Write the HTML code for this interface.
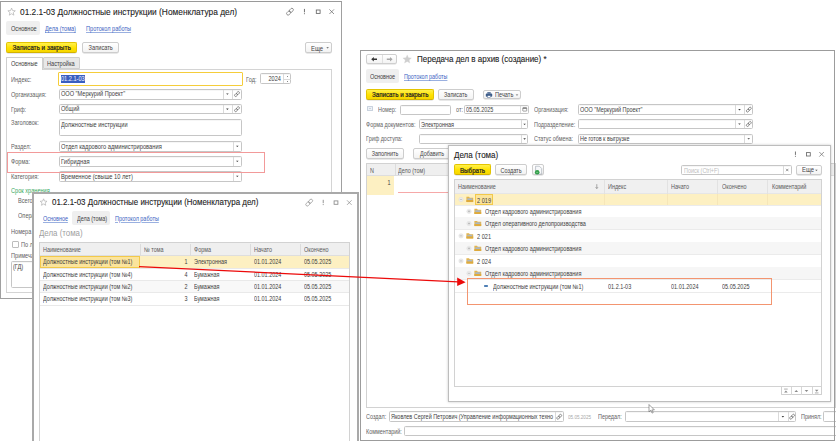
<!DOCTYPE html><html><head><meta charset="utf-8"><style>
html,body{margin:0;padding:0;background:#fff;width:836px;height:441px;overflow:hidden;position:relative;font-family:"Liberation Sans",sans-serif}
body div{position:absolute}
.t{white-space:nowrap}
.s{position:absolute;left:0;top:0;overflow:visible}
</style></head><body>
<div style="left:0px;top:1px;width:342px;height:298px;border:1px solid #a0a0a0;border-top:1.5px solid #9a9a9a;box-sizing:border-box;background:#fff"></div>
<svg class="s" width="836" height="441" viewBox="0 0 836 441"><polygon points="11.60,8.10 12.63,10.58 15.31,10.79 13.27,12.54 13.89,15.16 11.60,13.75 9.31,15.16 9.93,12.54 7.89,10.79 10.57,10.58" fill="none" stroke="#b0b0b0" stroke-width="0.7"/></svg>
<div class="t" style="left:20px;top:5.62px;font-size:8.851px;line-height:13.36px;color:#222;transform:scaleX(0.9434);transform-origin:left center;-webkit-text-stroke:0.1px #222">01.2.1-03 Должностные инструкции (Номенклатура дел)</div>
<svg class="s" width="836" height="441" viewBox="0 0 836 441"><g transform="translate(290,11.7) rotate(-45)" fill="none" stroke="#666" stroke-width="0.65"><rect x="-4.2" y="-1.5" width="4.6" height="3" rx="1.5"/><rect x="-0.4" y="-1.5" width="4.6" height="3" rx="1.5"/></g><rect x="303.95" y="8.899999999999999" width="0.9" height="3.4" fill="#666"/><rect x="303.95" y="13.2" width="0.9" height="1" fill="#666"/><rect x="316.3" y="10.0" width="3.8" height="3.4" fill="none" stroke="#666" stroke-width="0.85"/><path d="M329.4 9.399999999999999l4.6 4.6M334.0 9.399999999999999l-4.6 4.6" stroke="#666" stroke-width="0.7"/></svg>
<div style="left:6.3px;top:21.1px;width:34.2px;height:14.3px;background:#efefef;border-radius:2px"></div>
<div class="t" style="left:11px;top:24.92px;font-size:6.72px;line-height:8.96px;color:#404040;transform:scaleX(0.8333);transform-origin:left center;">Основное</div>
<div class="t" style="left:45.3px;top:24.92px;font-size:6.72px;line-height:8.96px;color:#3a62c2;transform:scaleX(0.8333);transform-origin:left center;text-decoration:underline;text-decoration-thickness:0.5px;text-underline-offset:0.9px;text-decoration-color:#9ab0e0">Дела (тома)</div>
<div class="t" style="left:86px;top:24.92px;font-size:6.72px;line-height:8.96px;color:#3a62c2;transform:scaleX(0.8333);transform-origin:left center;text-decoration:underline;text-decoration-thickness:0.5px;text-underline-offset:0.9px;text-decoration-color:#9ab0e0">Протокол работы</div>
<div style="left:6.3px;top:41.5px;width:71.2px;height:11.3px;background:linear-gradient(#fff14d,#ffe200 55%,#f6d600);border:1px solid #e3c400;border-bottom-color:#d4b300;box-sizing:border-box;border-radius:2px;box-shadow:0 0.6px 0.6px rgba(0,0,0,0.18)"></div>
<div class="t" style="left:6.3px;width:71.2px;text-align:center;top:42.95px;line-height:10px;font-size:6.816px;-webkit-text-stroke:0.22px #262626;color:#262626;transform:scaleX(0.9434);transform-origin:center center">Записать и закрыть</div>
<div style="left:81.6px;top:41.5px;width:37.4px;height:11.3px;background:linear-gradient(#ffffff,#f3f3f3);border:1px solid #cdcdcd;box-sizing:border-box;border-radius:2px;box-shadow:0 0.6px 0.6px rgba(0,0,0,0.18)"></div>
<div class="t" style="left:81.6px;width:37.4px;text-align:center;top:42.95px;line-height:10px;font-size:6.804px;color:#444;transform:scaleX(0.8333);transform-origin:center center">Записать</div>
<div style="left:305.1px;top:41.5px;width:26.7px;height:11.4px;background:linear-gradient(#ffffff,#f3f3f3);border:1px solid #cdcdcd;box-sizing:border-box;border-radius:2px;box-shadow:0 0.6px 0.6px rgba(0,0,0,0.18)"></div>
<div class="t" style="left:311px;top:43.6px;font-size:7.2px;line-height:9.6px;color:#444;transform:scaleX(0.8333);transform-origin:left center;">Еще</div>
<svg class="s" width="836" height="441" viewBox="0 0 836 441"><path d="M326.3 47.199999999999996h2.6l-1.3 1.4z" fill="#555"/></svg>
<div style="left:5.8px;top:69px;width:326.4px;height:223.6px;border:1px solid #d4d4d4;box-sizing:border-box"></div>
<div style="left:42.5px;top:57.4px;width:37.1px;height:12.1px;background:#e8e8e8;border:1px solid #cfcfcf;box-sizing:border-box;border-radius:1px 1px 0 0"></div>
<div style="left:5.8px;top:57.4px;width:37.0px;height:12.6px;background:#fff;border:1px solid #cfcfcf;border-bottom:none;box-sizing:border-box;border-radius:1px 1px 0 0"></div>
<div class="t" style="left:11px;top:59.92px;font-size:6.72px;line-height:8.96px;color:#404040;transform:scaleX(0.8333);transform-origin:left center;">Основные</div>
<div class="t" style="left:47px;top:59.92px;font-size:6.72px;line-height:8.96px;color:#404040;transform:scaleX(0.8333);transform-origin:left center;">Настройка</div>
<div class="t" style="left:11px;top:75.62px;font-size:6.72px;line-height:8.96px;color:#626262;transform:scaleX(0.8333);transform-origin:left center;">Индекс:</div>
<div style="left:58px;top:72.3px;width:184.6px;height:13.3px;border:1.5px solid #f5cd3a;box-sizing:border-box;background:#fff;border-radius:1px"></div>
<div style="left:61px;top:75.2px;width:24px;height:7.6px;background:#3a5fbf"></div>
<div class="t" style="left:61.2px;top:75.32px;font-size:6.72px;line-height:8.96px;color:#f4f6ff;transform:scaleX(0.8333);transform-origin:left center;">01.2.1-03</div>
<div class="t" style="left:246px;top:75.62px;font-size:6.72px;line-height:8.96px;color:#626262;transform:scaleX(0.8333);transform-origin:left center;">Год:</div>
<div style="left:259.6px;top:73.3px;width:31.8px;height:11.0px;border:1px solid #c6c6c6;box-sizing:border-box;background:#fff;border-radius:1.5px;box-shadow:inset 0 0.6px 0.6px rgba(0,0,0,0.07);"></div>
<div style="left:282.6px;top:74.3px;width:0.9px;height:9.0px;background:#dadada"></div>
<div style="left:283.5px;top:78.6px;width:7.0px;height:0.7px;background:#dadada"></div>
<div style="left:286.6px;top:76px;width:0.7px;height:0.7px;background:#888"></div>
<div style="left:286.6px;top:81.4px;width:0.7px;height:0.7px;background:#888"></div>
<div class="t" style="right:554.8px;top:75.32px;font-size:6.72px;line-height:8.96px;color:#404040;transform:scaleX(0.8333);transform-origin:right center;">2024</div>
<div class="t" style="left:11px;top:90.72px;font-size:6.72px;line-height:8.96px;color:#626262;transform:scaleX(0.8333);transform-origin:left center;">Организация:</div>
<div style="left:59px;top:88.5px;width:183px;height:11.1px;border:1px solid #c6c6c6;box-sizing:border-box;background:#fff;border-radius:1.5px;box-shadow:inset 0 0.6px 0.6px rgba(0,0,0,0.07);"></div>
<div style="left:222.6px;top:89.5px;width:0.9px;height:9.1px;background:#dadada"></div>
<div style="left:232.1px;top:89.5px;width:0.9px;height:9.1px;background:#dadada"></div>
<div class="t" style="left:61px;top:90.17px;font-size:6.72px;line-height:8.96px;color:#404040;transform:scaleX(0.8333);transform-origin:left center;">ООО "Меркурий Проект"</div>
<svg class="s" width="836" height="441" viewBox="0 0 836 441"><path d="M226.1 93.45h2.6l-1.3 1.4z" fill="#3a3a3a"/></svg>
<svg class="s" width="836" height="441" viewBox="0 0 836 441"><g transform="translate(237,94.05) rotate(-45)" fill="none" stroke="#666" stroke-width="0.7"><rect x="-3" y="-1.1" width="3.2" height="2.2" rx="1.1"/><rect x="-0.2" y="-1.1" width="3.2" height="2.2" rx="1.1"/></g></svg>
<div class="t" style="left:11px;top:105.82px;font-size:6.72px;line-height:8.96px;color:#626262;transform:scaleX(0.8333);transform-origin:left center;">Гриф:</div>
<div style="left:59px;top:103.9px;width:183px;height:10.6px;border:1px solid #c6c6c6;box-sizing:border-box;background:#fff;border-radius:1.5px;box-shadow:inset 0 0.6px 0.6px rgba(0,0,0,0.07);"></div>
<div style="left:222.6px;top:104.9px;width:0.9px;height:8.6px;background:#dadada"></div>
<div style="left:232.1px;top:104.9px;width:0.9px;height:8.6px;background:#dadada"></div>
<div class="t" style="left:61px;top:105.32px;font-size:6.72px;line-height:8.96px;color:#404040;transform:scaleX(0.8333);transform-origin:left center;">Общий</div>
<svg class="s" width="836" height="441" viewBox="0 0 836 441"><path d="M226.1 108.60000000000001h2.6l-1.3 1.4z" fill="#3a3a3a"/></svg>
<svg class="s" width="836" height="441" viewBox="0 0 836 441"><g transform="translate(237,109.2) rotate(-45)" fill="none" stroke="#666" stroke-width="0.7"><rect x="-3" y="-1.1" width="3.2" height="2.2" rx="1.1"/><rect x="-0.2" y="-1.1" width="3.2" height="2.2" rx="1.1"/></g></svg>
<div class="t" style="left:11px;top:119.32px;font-size:6.72px;line-height:8.96px;color:#626262;transform:scaleX(0.8333);transform-origin:left center;">Заголовок:</div>
<div style="left:59px;top:119.3px;width:183px;height:17.0px;border:1px solid #c6c6c6;box-sizing:border-box;background:#fff;border-radius:1.5px;box-shadow:inset 0 0.6px 0.6px rgba(0,0,0,0.07);"></div>
<div class="t" style="left:61px;top:120.82px;font-size:6.72px;line-height:8.96px;color:#404040;transform:scaleX(0.8333);transform-origin:left center;">Должностные инструкции</div>
<div class="t" style="left:11px;top:142.82px;font-size:6.72px;line-height:8.96px;color:#626262;transform:scaleX(0.8333);transform-origin:left center;">Раздел:</div>
<div style="left:59px;top:140.8px;width:183px;height:10.9px;border:1px solid #c6c6c6;box-sizing:border-box;background:#fff;border-radius:1.5px;box-shadow:inset 0 0.6px 0.6px rgba(0,0,0,0.07);"></div>
<div style="left:232.6px;top:141.8px;width:0.9px;height:8.9px;background:#dadada"></div>
<div class="t" style="left:61px;top:142.25px;font-size:6.9px;line-height:9.2px;color:#404040;transform:scaleX(0.8333);transform-origin:left center;">Отдел кадрового администрирования</div>
<svg class="s" width="836" height="441" viewBox="0 0 836 441"><path d="M236.0 145.65h2.6l-1.3 1.4z" fill="#3a3a3a"/></svg>
<div class="t" style="left:11px;top:157.52px;font-size:6.72px;line-height:8.96px;color:#626262;transform:scaleX(0.8333);transform-origin:left center;">Форма:</div>
<div style="left:59px;top:155.6px;width:183px;height:11.3px;border:1px solid #c6c6c6;box-sizing:border-box;background:#fff;border-radius:1.5px;box-shadow:inset 0 0.6px 0.6px rgba(0,0,0,0.07);"></div>
<div style="left:232.6px;top:156.6px;width:0.9px;height:9.3px;background:#dadada"></div>
<div class="t" style="left:61px;top:157.25px;font-size:6.9px;line-height:9.2px;color:#404040;transform:scaleX(0.8333);transform-origin:left center;">Гибридная</div>
<svg class="s" width="836" height="441" viewBox="0 0 836 441"><path d="M236.0 160.65h2.6l-1.3 1.4z" fill="#3a3a3a"/></svg>
<div class="t" style="left:11px;top:172.92px;font-size:6.72px;line-height:8.96px;color:#626262;transform:scaleX(0.8333);transform-origin:left center;">Категория:</div>
<div style="left:59px;top:171px;width:183px;height:10.6px;border:1px solid #c6c6c6;box-sizing:border-box;background:#fff;border-radius:1.5px;box-shadow:inset 0 0.6px 0.6px rgba(0,0,0,0.07);"></div>
<div style="left:232.6px;top:172px;width:0.9px;height:8.6px;background:#dadada"></div>
<div class="t" style="left:61px;top:172.3px;font-size:6.9px;line-height:9.2px;color:#404040;transform:scaleX(0.8333);transform-origin:left center;">Временное (свыше 10 лет)</div>
<svg class="s" width="836" height="441" viewBox="0 0 836 441"><path d="M236.0 175.70000000000002h2.6l-1.3 1.4z" fill="#3a3a3a"/></svg>
<div style="left:7.3px;top:151.7px;width:257.5px;height:20.9px;border:1px solid #f29a9a;box-sizing:border-box"></div>
<div class="t" style="left:11px;top:186.52px;font-size:6.72px;line-height:8.96px;color:#36a860;transform:scaleX(0.8333);transform-origin:left center;">Срок хранения</div>
<div class="t" style="left:18px;top:196.92px;font-size:6.72px;line-height:8.96px;color:#626262;transform:scaleX(0.8333);transform-origin:left center;">Всего</div>
<div class="t" style="left:18px;top:211.92px;font-size:6.72px;line-height:8.96px;color:#626262;transform:scaleX(0.8333);transform-origin:left center;">Оперативно</div>
<div class="t" style="left:11px;top:227.62px;font-size:6.72px;line-height:8.96px;color:#626262;transform:scaleX(0.8333);transform-origin:left center;">Номера</div>
<div style="left:11.5px;top:240.6px;width:7.0px;height:7.0px;border:1px solid #bdbdbd;box-sizing:border-box;background:#fff;border-radius:1px"></div>
<div class="t" style="left:21px;top:240.52px;font-size:6.72px;line-height:8.96px;color:#626262;transform:scaleX(0.8333);transform-origin:left center;">По л</div>
<div class="t" style="left:11px;top:251.82px;font-size:6.72px;line-height:8.96px;color:#626262;transform:scaleX(0.8333);transform-origin:left center;">Примечание</div>
<div style="left:11px;top:261px;width:49px;height:27px;border:1px solid #c6c6c6;box-sizing:border-box;background:#fff;border-radius:1.5px;box-shadow:inset 0 0.6px 0.6px rgba(0,0,0,0.07);"></div>
<div class="t" style="left:13.2px;top:262.52px;font-size:6.72px;line-height:8.96px;color:#404040;transform:scaleX(0.8333);transform-origin:left center;">(ГД)</div>
<div style="left:32px;top:192px;width:327px;height:268px;border:2px solid #a9a9a9;box-sizing:border-box;background:#fff"></div>
<svg class="s" width="836" height="441" viewBox="0 0 836 441"><polygon points="43.60,198.80 44.55,201.09 47.02,201.29 45.14,202.90 45.72,205.31 43.60,204.02 41.48,205.31 42.06,202.90 40.18,201.29 42.65,201.09" fill="none" stroke="#b0b0b0" stroke-width="0.7"/></svg>
<div class="t" style="left:52px;top:196.44px;font-size:8.427px;line-height:12.72px;color:#222;transform:scaleX(0.9434);transform-origin:left center;-webkit-text-stroke:0.1px #222">01.2.1-03 Должностные инструкции (Номенклатура дел)</div>
<svg class="s" width="836" height="441" viewBox="0 0 836 441"><g transform="translate(309.2,202.6) rotate(-45)" fill="none" stroke="#8a8a8a" stroke-width="0.65"><rect x="-4.2" y="-1.5" width="4.6" height="3" rx="1.5"/><rect x="-0.4" y="-1.5" width="4.6" height="3" rx="1.5"/></g><rect x="322.75" y="199.79999999999998" width="0.9" height="3.4" fill="#8a8a8a"/><rect x="322.75" y="204.1" width="0.9" height="1" fill="#8a8a8a"/><rect x="334.1" y="200.9" width="3.8" height="3.4" fill="none" stroke="#8a8a8a" stroke-width="0.85"/><path d="M347.0 200.29999999999998l4.6 4.6M351.6 200.29999999999998l-4.6 4.6" stroke="#8a8a8a" stroke-width="0.7"/></svg>
<div class="t" style="left:43.2px;top:214.64px;font-size:6.54px;line-height:8.72px;color:#3a62c2;transform:scaleX(0.8333);transform-origin:left center;text-decoration:underline;text-decoration-thickness:0.5px;text-underline-offset:0.9px;text-decoration-color:#9ab0e0">Основное</div>
<div style="left:72.3px;top:211px;width:37.7px;height:13.6px;background:#efefef;border-radius:2px"></div>
<div class="t" style="left:77px;top:214.64px;font-size:6.54px;line-height:8.72px;color:#404040;transform:scaleX(0.8333);transform-origin:left center;">Дела (тома)</div>
<div class="t" style="left:114.8px;top:214.64px;font-size:6.54px;line-height:8.72px;color:#3a62c2;transform:scaleX(0.8333);transform-origin:left center;text-decoration:underline;text-decoration-thickness:0.5px;text-underline-offset:0.9px;text-decoration-color:#9ab0e0">Протокол работы</div>
<div class="t" style="left:38.7px;top:226.78px;font-size:9.48px;line-height:12.64px;color:#a0a0a0;transform:scaleX(0.8333);transform-origin:left center;">Дела (тома)</div>
<div style="left:38.6px;top:242px;width:311.4px;height:218px;border:1px solid #d2d2d2;box-sizing:border-box"></div>
<div style="left:39.6px;top:243px;width:309.4px;height:13px;background:#efefef;border-bottom:1px solid #dedede;box-sizing:border-box"></div>
<div style="left:140.2px;top:243.5px;width:0.8px;height:12.5px;background:#dcdcdc"></div>
<div style="left:189.5px;top:243.5px;width:0.8px;height:12.5px;background:#dcdcdc"></div>
<div style="left:250.2px;top:243.5px;width:0.8px;height:12.5px;background:#dcdcdc"></div>
<div style="left:299.6px;top:243.5px;width:0.8px;height:12.5px;background:#dcdcdc"></div>
<div class="t" style="left:42.5px;top:246.04px;font-size:6.54px;line-height:8.72px;color:#5a5a5a;transform:scaleX(0.8333);transform-origin:left center;">Наименование</div>
<div class="t" style="left:144px;top:246.04px;font-size:6.54px;line-height:8.72px;color:#5a5a5a;transform:scaleX(0.8333);transform-origin:left center;">№ тома</div>
<div class="t" style="left:193.5px;top:246.04px;font-size:6.54px;line-height:8.72px;color:#5a5a5a;transform:scaleX(0.8333);transform-origin:left center;">Форма</div>
<div class="t" style="left:254px;top:246.04px;font-size:6.54px;line-height:8.72px;color:#5a5a5a;transform:scaleX(0.8333);transform-origin:left center;">Начато</div>
<div class="t" style="left:303.5px;top:246.04px;font-size:6.54px;line-height:8.72px;color:#5a5a5a;transform:scaleX(0.8333);transform-origin:left center;">Окончено</div>
<div style="left:39.6px;top:256.0px;width:309.4px;height:12.3px;background:#fdf0c2"></div>
<div style="left:39.6px;top:256.0px;width:100.9px;height:12.3px;background:#fbe49c;border:1px solid #f2c94a;box-sizing:border-box"></div>
<div style="left:39.6px;top:267.6px;width:309.4px;height:0.7px;background:#e9e9e9"></div>
<div class="t" style="left:42.5px;top:258.24px;font-size:6.54px;line-height:8.72px;color:#404040;transform:scaleX(0.8333);transform-origin:left center;">Должностные инструкции (том №1)</div>
<div class="t" style="right:648.8px;top:258.24px;font-size:6.54px;line-height:8.72px;color:#404040;transform:scaleX(0.8333);transform-origin:right center;">1</div>
<div class="t" style="left:193.5px;top:258.24px;font-size:6.54px;line-height:8.72px;color:#404040;transform:scaleX(0.8333);transform-origin:left center;">Электронная</div>
<div class="t" style="left:254px;top:258.24px;font-size:6.54px;line-height:8.72px;color:#404040;transform:scaleX(0.8333);transform-origin:left center;">01.01.2024</div>
<div class="t" style="left:303.5px;top:258.24px;font-size:6.54px;line-height:8.72px;color:#404040;transform:scaleX(0.8333);transform-origin:left center;">05.05.2025</div>
<div style="left:39.6px;top:279.90000000000003px;width:309.4px;height:0.7px;background:#e9e9e9"></div>
<div class="t" style="left:42.5px;top:270.54px;font-size:6.54px;line-height:8.72px;color:#404040;transform:scaleX(0.8333);transform-origin:left center;">Должностные инструкции (том №4)</div>
<div class="t" style="right:648.8px;top:270.54px;font-size:6.54px;line-height:8.72px;color:#404040;transform:scaleX(0.8333);transform-origin:right center;">4</div>
<div class="t" style="left:193.5px;top:270.54px;font-size:6.54px;line-height:8.72px;color:#404040;transform:scaleX(0.8333);transform-origin:left center;">Бумажная</div>
<div class="t" style="left:254px;top:270.54px;font-size:6.54px;line-height:8.72px;color:#404040;transform:scaleX(0.8333);transform-origin:left center;">01.01.2024</div>
<div class="t" style="left:303.5px;top:270.54px;font-size:6.54px;line-height:8.72px;color:#404040;transform:scaleX(0.8333);transform-origin:left center;">05.05.2025</div>
<div style="left:39.6px;top:280.6px;width:309.4px;height:12.3px;background:#f8f8f8"></div>
<div style="left:39.6px;top:292.20000000000005px;width:309.4px;height:0.7px;background:#e9e9e9"></div>
<div class="t" style="left:42.5px;top:282.84px;font-size:6.54px;line-height:8.72px;color:#404040;transform:scaleX(0.8333);transform-origin:left center;">Должностные инструкции (том №2)</div>
<div class="t" style="right:648.8px;top:282.84px;font-size:6.54px;line-height:8.72px;color:#404040;transform:scaleX(0.8333);transform-origin:right center;">2</div>
<div class="t" style="left:193.5px;top:282.84px;font-size:6.54px;line-height:8.72px;color:#404040;transform:scaleX(0.8333);transform-origin:left center;">Бумажная</div>
<div class="t" style="left:254px;top:282.84px;font-size:6.54px;line-height:8.72px;color:#404040;transform:scaleX(0.8333);transform-origin:left center;">01.01.2024</div>
<div class="t" style="left:303.5px;top:282.84px;font-size:6.54px;line-height:8.72px;color:#404040;transform:scaleX(0.8333);transform-origin:left center;">05.05.2025</div>
<div style="left:39.6px;top:304.5px;width:309.4px;height:0.7px;background:#e9e9e9"></div>
<div class="t" style="left:42.5px;top:295.14px;font-size:6.54px;line-height:8.72px;color:#404040;transform:scaleX(0.8333);transform-origin:left center;">Должностные инструкции (том №3)</div>
<div class="t" style="right:648.8px;top:295.14px;font-size:6.54px;line-height:8.72px;color:#404040;transform:scaleX(0.8333);transform-origin:right center;">3</div>
<div class="t" style="left:193.5px;top:295.14px;font-size:6.54px;line-height:8.72px;color:#404040;transform:scaleX(0.8333);transform-origin:left center;">Бумажная</div>
<div class="t" style="left:254px;top:295.14px;font-size:6.54px;line-height:8.72px;color:#404040;transform:scaleX(0.8333);transform-origin:left center;">01.01.2024</div>
<div class="t" style="left:303.5px;top:295.14px;font-size:6.54px;line-height:8.72px;color:#404040;transform:scaleX(0.8333);transform-origin:left center;">05.05.2025</div>
<div style="left:360px;top:50px;width:475px;height:391px;border:1.3px solid #9c9c9c;box-sizing:border-box;background:#fff"></div>
<div style="left:366.3px;top:54px;width:31.2px;height:10.4px;background:linear-gradient(#fff,#f3f3f3);border:1px solid #cfcfcf;box-sizing:border-box;border-radius:2px;box-shadow:0 0.6px 0.6px rgba(0,0,0,0.15)"></div>
<div style="left:382px;top:55px;width:0.7px;height:8.4px;background:#e0e0e0"></div>
<svg class="s" width="836" height="441" viewBox="0 0 836 441"><path d="M371.2 59.2l2.6-2.2v1.5h3.2v1.4h-3.2v1.5z" fill="#333"/><path d="M392.6 59.2l-2.6-2.2v1.5h-3.2v1.4h3.2v1.5z" fill="#a8a8a8"/></svg>
<svg class="s" width="836" height="441" viewBox="0 0 836 441"><polygon points="407.20,54.90 408.39,57.76 411.48,58.01 409.13,60.03 409.85,63.04 407.20,61.42 404.55,63.04 405.27,60.03 402.92,58.01 406.01,57.76" fill="#cfcfcf" stroke="#cfcfcf" stroke-width="0.3"/></svg>
<div class="t" style="left:416.6px;top:53.3px;font-size:8.48px;line-height:12.8px;color:#222;transform:scaleX(0.9434);transform-origin:left center;-webkit-text-stroke:0.1px #222">Передача дел в архив (создание) *</div>
<div style="left:366.1px;top:69px;width:32.9px;height:13.9px;background:#efefef;border-radius:2px"></div>
<div class="t" style="left:370.3px;top:72.7px;font-size:6.6px;line-height:8.8px;color:#404040;transform:scaleX(0.8333);transform-origin:left center;">Основное</div>
<div class="t" style="left:403.9px;top:72.98px;font-size:6.48px;line-height:8.64px;color:#3a62c2;transform:scaleX(0.8333);transform-origin:left center;text-decoration:underline;text-decoration-thickness:0.5px;text-underline-offset:0.9px;text-decoration-color:#9ab0e0">Протокол работы</div>
<div style="left:366.1px;top:89.2px;width:68.3px;height:10.8px;background:linear-gradient(#fff14d,#ffe200 55%,#f6d600);border:1px solid #e3c400;border-bottom-color:#d4b300;box-sizing:border-box;border-radius:2px;box-shadow:0 0.6px 0.6px rgba(0,0,0,0.18)"></div>
<div class="t" style="left:366.1px;width:68.3px;text-align:center;top:90.4px;line-height:10px;font-size:6.593px;-webkit-text-stroke:0.22px #262626;color:#262626;transform:scaleX(0.9434);transform-origin:center center">Записать и закрыть</div>
<div style="left:438.3px;top:89.2px;width:35.4px;height:10.8px;background:linear-gradient(#ffffff,#f3f3f3);border:1px solid #cdcdcd;box-sizing:border-box;border-radius:2px;box-shadow:0 0.6px 0.6px rgba(0,0,0,0.18)"></div>
<div class="t" style="left:438.3px;width:35.4px;text-align:center;top:90.4px;line-height:10px;font-size:6.54px;color:#444;transform:scaleX(0.8333);transform-origin:center center">Записать</div>
<div style="left:482.5px;top:89.6px;width:38.3px;height:9.8px;background:linear-gradient(#ffffff,#f3f3f3);border:1px solid #cdcdcd;box-sizing:border-box;border-radius:2px;box-shadow:0 0.6px 0.6px rgba(0,0,0,0.18)"></div>
<svg class="s" width="836" height="441" viewBox="0 0 836 441"><path d="M487.3 92.2h3.4v1.4h-3.4z" fill="#3e5d8a"/><rect x="485.8" y="93.6" width="6.4" height="3.2" rx="0.8" fill="#3e5d8a"/><rect x="487.3" y="95.6" width="3.4" height="2" fill="#fff" stroke="#3e5d8a" stroke-width="0.5"/></svg>
<div class="t" style="left:495px;top:91.12px;font-size:6.72px;line-height:8.96px;color:#444;transform:scaleX(0.8333);transform-origin:left center;">Печать</div>
<svg class="s" width="836" height="441" viewBox="0 0 836 441"><path d="M515.7 94.4h2.6l-1.3 1.4z" fill="#666"/></svg>
<div style="left:367px;top:106px;width:6px;height:5px;background:#c9d2de;border-radius:0.5px"></div>
<div style="left:368.2px;top:107.1px;width:3.6px;height:2.8px;border:0.6px solid #eef2f7;box-sizing:border-box"></div>
<div class="t" style="left:378.4px;top:106.34px;font-size:6.54px;line-height:8.72px;color:#626262;transform:scaleX(0.8333);transform-origin:left center;">Номер:</div>
<div style="left:399.5px;top:104.5px;width:51.3px;height:10.0px;border:1px solid #c6c6c6;box-sizing:border-box;background:#fff;border-radius:1.5px;box-shadow:inset 0 0.6px 0.6px rgba(0,0,0,0.07);"></div>
<div class="t" style="left:455.5px;top:106.34px;font-size:6.54px;line-height:8.72px;color:#626262;transform:scaleX(0.8333);transform-origin:left center;">от:</div>
<div style="left:464px;top:104.6px;width:65.2px;height:9.7px;border:1px solid #c6c6c6;box-sizing:border-box;background:#fff;border-radius:1.5px;box-shadow:inset 0 0.6px 0.6px rgba(0,0,0,0.07);"></div>
<div style="left:520.2px;top:105.6px;width:0.9px;height:7.7px;background:#dadada"></div>
<svg class="s" width="836" height="441" viewBox="0 0 836 441"><rect x="522.8" y="107.7" width="3.9" height="3.4" rx="0.4" fill="none" stroke="#666" stroke-width="0.6"/><rect x="522.8" y="107.7" width="3.9" height="1" fill="#666"/></svg>
<div class="t" style="left:466.3px;top:106.14px;font-size:6.54px;line-height:8.72px;color:#404040;transform:scaleX(0.8333);transform-origin:left center;">05.05.2025</div>
<div class="t" style="left:533.8px;top:106.34px;font-size:6.54px;line-height:8.72px;color:#626262;transform:scaleX(0.8333);transform-origin:left center;">Организация:</div>
<div style="left:577.7px;top:104.4px;width:175.6px;height:10.4px;border:1px solid #c6c6c6;box-sizing:border-box;background:#fff;border-radius:1.5px;box-shadow:inset 0 0.6px 0.6px rgba(0,0,0,0.07);"></div>
<div style="left:735px;top:105.4px;width:0.9px;height:8.4px;background:#dadada"></div>
<div style="left:744px;top:105.4px;width:0.9px;height:8.4px;background:#dadada"></div>
<div class="t" style="left:580px;top:106.14px;font-size:6.54px;line-height:8.72px;color:#404040;transform:scaleX(0.8333);transform-origin:left center;">ООО "Меркурий Проект"</div>
<svg class="s" width="836" height="441" viewBox="0 0 836 441"><path d="M738.2 109.0h2.6l-1.3 1.4z" fill="#3a3a3a"/></svg>
<svg class="s" width="836" height="441" viewBox="0 0 836 441"><g transform="translate(748.8,109.6) rotate(-45)" fill="none" stroke="#666" stroke-width="0.7"><rect x="-3" y="-1.1" width="3.2" height="2.2" rx="1.1"/><rect x="-0.2" y="-1.1" width="3.2" height="2.2" rx="1.1"/></g></svg>
<div class="t" style="left:366px;top:120.84px;font-size:6.54px;line-height:8.72px;color:#626262;transform:scaleX(0.8333);transform-origin:left center;">Форма документов:</div>
<div style="left:418.9px;top:119.1px;width:109.6px;height:10.3px;border:1px solid #c6c6c6;box-sizing:border-box;background:#fff;border-radius:1.5px;box-shadow:inset 0 0.6px 0.6px rgba(0,0,0,0.07);"></div>
<div style="left:520.6px;top:120.1px;width:0.9px;height:8.3px;background:#dadada"></div>
<div class="t" style="left:421px;top:120.74px;font-size:6.54px;line-height:8.72px;color:#404040;transform:scaleX(0.8333);transform-origin:left center;">Электронная</div>
<svg class="s" width="836" height="441" viewBox="0 0 836 441"><path d="M523.3000000000001 123.7h2.6l-1.3 1.4z" fill="#3a3a3a"/></svg>
<div class="t" style="left:533.8px;top:120.84px;font-size:6.54px;line-height:8.72px;color:#626262;transform:scaleX(0.8333);transform-origin:left center;">Подразделение:</div>
<div style="left:577.7px;top:119px;width:175.6px;height:10px;border:1px solid #c6c6c6;box-sizing:border-box;background:#fff;border-radius:1.5px;box-shadow:inset 0 0.6px 0.6px rgba(0,0,0,0.07);"></div>
<div style="left:735px;top:120px;width:0.9px;height:8px;background:#dadada"></div>
<div style="left:744px;top:120px;width:0.9px;height:8px;background:#dadada"></div>
<svg class="s" width="836" height="441" viewBox="0 0 836 441"><path d="M738.2 123.4h2.6l-1.3 1.4z" fill="#3a3a3a"/></svg>
<svg class="s" width="836" height="441" viewBox="0 0 836 441"><g transform="translate(748.8,124) rotate(-45)" fill="none" stroke="#666" stroke-width="0.7"><rect x="-3" y="-1.1" width="3.2" height="2.2" rx="1.1"/><rect x="-0.2" y="-1.1" width="3.2" height="2.2" rx="1.1"/></g></svg>
<div class="t" style="left:366px;top:135.44px;font-size:6.54px;line-height:8.72px;color:#626262;transform:scaleX(0.8333);transform-origin:left center;">Гриф доступа:</div>
<div style="left:418.9px;top:133.8px;width:109.6px;height:10.2px;border:1px solid #c6c6c6;box-sizing:border-box;background:#fff;border-radius:1.5px;box-shadow:inset 0 0.6px 0.6px rgba(0,0,0,0.07);"></div>
<div style="left:520.6px;top:134.8px;width:0.9px;height:8.2px;background:#dadada"></div>
<svg class="s" width="836" height="441" viewBox="0 0 836 441"><path d="M523.3000000000001 138.3h2.6l-1.3 1.4z" fill="#3a3a3a"/></svg>
<div class="t" style="left:533.8px;top:135.44px;font-size:6.54px;line-height:8.72px;color:#626262;transform:scaleX(0.8333);transform-origin:left center;">Статус обмена:</div>
<div style="left:577.7px;top:133.7px;width:175.6px;height:10.2px;border:1px solid #c6c6c6;box-sizing:border-box;background:#fff;border-radius:1.5px;box-shadow:inset 0 0.6px 0.6px rgba(0,0,0,0.07);"></div>
<div style="left:744.2px;top:134.7px;width:0.9px;height:8.2px;background:#dadada"></div>
<div class="t" style="left:580px;top:135.34px;font-size:6.54px;line-height:8.72px;color:#404040;transform:scaleX(0.8333);transform-origin:left center;">Не готов к выгрузке</div>
<svg class="s" width="836" height="441" viewBox="0 0 836 441"><path d="M747.4000000000001 138.20000000000002h2.6l-1.3 1.4z" fill="#3a3a3a"/></svg>
<div style="left:366.1px;top:148.4px;width:38.1px;height:10.3px;background:linear-gradient(#ffffff,#f3f3f3);border:1px solid #cdcdcd;box-sizing:border-box;border-radius:2px;box-shadow:0 0.6px 0.6px rgba(0,0,0,0.18)"></div>
<div class="t" style="left:366.1px;width:38.1px;text-align:center;top:149.35px;line-height:10px;font-size:6.528px;color:#444;transform:scaleX(0.8333);transform-origin:center center">Заполнить</div>
<div style="left:413px;top:148.4px;width:42px;height:10.3px;background:linear-gradient(#ffffff,#f3f3f3);border:1px solid #cdcdcd;box-sizing:border-box;border-radius:2px;box-shadow:0 0.6px 0.6px rgba(0,0,0,0.18)"></div>
<div class="t" style="left:410.5px;width:42px;text-align:center;top:149.35px;line-height:10px;font-size:6.528px;color:#444;transform:scaleX(0.8333);transform-origin:center center">Добавить</div>
<div style="left:366.2px;top:163.1px;width:469.8px;height:245.1px;border:1px solid #d2d2d2;box-sizing:border-box"></div>
<div style="left:367.2px;top:164.1px;width:466.8px;height:12.1px;background:#efefef;border-bottom:1px solid #dedede;box-sizing:border-box"></div>
<div style="left:394.5px;top:164.1px;width:0.8px;height:12.1px;background:#dcdcdc"></div>
<div class="t" style="left:370.3px;top:166.54px;font-size:6.54px;line-height:8.72px;color:#5a5a5a;transform:scaleX(0.8333);transform-origin:left center;">N</div>
<div class="t" style="left:398px;top:166.54px;font-size:6.54px;line-height:8.72px;color:#5a5a5a;transform:scaleX(0.8333);transform-origin:left center;">Дело (том)</div>
<div style="left:367.2px;top:176.2px;width:27.3px;height:18.8px;background:#fdf0c2"></div>
<div class="t" style="right:445.3px;top:179.24px;font-size:6.54px;line-height:8.72px;color:#404040;transform:scaleX(0.8333);transform-origin:right center;">1</div>
<div style="left:398px;top:192.1px;width:51px;height:0.8px;background:#f6a8a8"></div>
<div class="t" style="left:366px;top:413.34px;font-size:6.54px;line-height:8.72px;color:#626262;transform:scaleX(0.8333);transform-origin:left center;">Создал:</div>
<div style="left:388.8px;top:411.4px;width:175.0px;height:10.2px;border:1px solid #c6c6c6;box-sizing:border-box;background:#fff;border-radius:1.5px;box-shadow:inset 0 0.6px 0.6px rgba(0,0,0,0.07);"></div>
<div style="left:554.7px;top:412.4px;width:0.9px;height:8.2px;background:#dadada"></div>
<div class="t" style="left:391px;top:413.24px;font-size:6.54px;line-height:8.72px;color:#404040;transform:scaleX(0.8333);transform-origin:left center;">Яковлев Сергей Петрович (Управление информационных техно</div>
<svg class="s" width="836" height="441" viewBox="0 0 836 441"><g transform="translate(559.2,416.8) rotate(-45)" fill="none" stroke="#666" stroke-width="0.7"><rect x="-3" y="-1.1" width="3.2" height="2.2" rx="1.1"/><rect x="-0.2" y="-1.1" width="3.2" height="2.2" rx="1.1"/></g></svg>
<div class="t" style="left:568.4px;top:414.02px;font-size:5.52px;line-height:7.36px;color:#a8a8a8;transform:scaleX(0.8333);transform-origin:left center;">05.05.2025</div>
<div class="t" style="left:598px;top:413.34px;font-size:6.54px;line-height:8.72px;color:#626262;transform:scaleX(0.8333);transform-origin:left center;">Передал:</div>
<div style="left:624.6px;top:411.4px;width:171.9px;height:10.2px;border:1px solid #c6c6c6;box-sizing:border-box;background:#fff;border-radius:1.5px;box-shadow:inset 0 0.6px 0.6px rgba(0,0,0,0.07);"></div>
<div style="left:778px;top:412.4px;width:0.9px;height:8.2px;background:#dadada"></div>
<div style="left:787.7px;top:412.4px;width:0.9px;height:8.2px;background:#dadada"></div>
<svg class="s" width="836" height="441" viewBox="0 0 836 441"><path d="M781.6 416.09999999999997h2.6l-1.3 1.4z" fill="#3a3a3a"/></svg>
<svg class="s" width="836" height="441" viewBox="0 0 836 441"><g transform="translate(792.1,416.7) rotate(-45)" fill="none" stroke="#666" stroke-width="0.7"><rect x="-3" y="-1.1" width="3.2" height="2.2" rx="1.1"/><rect x="-0.2" y="-1.1" width="3.2" height="2.2" rx="1.1"/></g></svg>
<div class="t" style="left:800.6px;top:413.34px;font-size:6.54px;line-height:8.72px;color:#626262;transform:scaleX(0.8333);transform-origin:left center;">Принял:</div>
<div style="left:823.4px;top:411.4px;width:26.6px;height:10.2px;border:1px solid #c6c6c6;box-sizing:border-box;background:#fff;border-radius:1.5px;box-shadow:inset 0 0.6px 0.6px rgba(0,0,0,0.07);"></div>
<div class="t" style="left:366px;top:428.04px;font-size:6.54px;line-height:8.72px;color:#626262;transform:scaleX(0.8333);transform-origin:left center;">Комментарий:</div>
<div style="left:404.4px;top:426.4px;width:445.6px;height:10.0px;border:1px solid #c6c6c6;box-sizing:border-box;background:#fff;border-radius:1.5px;box-shadow:inset 0 0.6px 0.6px rgba(0,0,0,0.07);"></div>
<div style="left:360px;top:50px;width:475px;height:391px;border:1.3px solid #9c9c9c;box-sizing:border-box"></div>
<div style="left:448px;top:145px;width:383px;height:256.6px;border:1px solid #bdbdbd;box-sizing:border-box;background:#fff;box-shadow:0 0 2.5px rgba(0,0,0,0.22)"></div>
<div class="t" style="left:454px;top:148.5px;font-size:8.48px;line-height:12.8px;color:#222;transform:scaleX(0.9434);transform-origin:left center;-webkit-text-stroke:0.1px #222">Дела (тома)</div>
<svg class="s" width="836" height="441" viewBox="0 0 836 441"><rect x="794.9499999999999" y="151.5" width="0.9" height="3.4" fill="#6a6a6a"/><rect x="794.9499999999999" y="155.8" width="0.9" height="1" fill="#6a6a6a"/><rect x="806.5" y="152.60000000000002" width="3.8" height="3.4" fill="none" stroke="#6a6a6a" stroke-width="0.85"/><path d="M819.3000000000001 152.0l4.6 4.6M823.9 152.0l-4.6 4.6" stroke="#6a6a6a" stroke-width="0.7"/></svg>
<div style="left:454px;top:164px;width:37px;height:11.4px;background:linear-gradient(#fff14d,#ffe200 55%,#f6d600);border:1px solid #e3c400;border-bottom-color:#d4b300;box-sizing:border-box;border-radius:2px;box-shadow:0 0.6px 0.6px rgba(0,0,0,0.18)"></div>
<div class="t" style="left:454px;width:37px;text-align:center;top:165.5px;line-height:10px;font-size:6.604px;-webkit-text-stroke:0.22px #262626;color:#262626;transform:scaleX(0.9434);transform-origin:center center">Выбрать</div>
<div style="left:495px;top:164px;width:32px;height:11.4px;background:linear-gradient(#ffffff,#f3f3f3);border:1px solid #cdcdcd;box-sizing:border-box;border-radius:2px;box-shadow:0 0.6px 0.6px rgba(0,0,0,0.18)"></div>
<div class="t" style="left:495px;width:32px;text-align:center;top:165.5px;line-height:10px;font-size:6.66px;color:#444;transform:scaleX(0.8333);transform-origin:center center">Создать</div>
<div style="left:531.8px;top:164px;width:12.7px;height:11.4px;background:linear-gradient(#ffffff,#f3f3f3);border:1px solid #cdcdcd;box-sizing:border-box;border-radius:2px;box-shadow:0 0.6px 0.6px rgba(0,0,0,0.18)"></div>
<svg class="s" width="836" height="441" viewBox="0 0 836 441"><path d="M535.6 166.2h3.8l2.3 2.3v5.6h-6.1z" fill="#f7f8fa" stroke="#9aa3ad" stroke-width="0.6"/><circle cx="537.2" cy="172.3" r="2.3" fill="#33a04a"/><path d="M536.2 172.4h2" stroke="#bfe8c8" stroke-width="0.5"/></svg>
<div style="left:681px;top:164.6px;width:110.9px;height:10.6px;border:1px solid #c6c6c6;box-sizing:border-box;background:#fff;border-radius:1.5px;box-shadow:inset 0 0.6px 0.6px rgba(0,0,0,0.07);"></div>
<div style="left:782.8px;top:165.6px;width:0.9px;height:8.6px;background:#dadada"></div>
<div class="t" style="left:683.5px;top:166.54px;font-size:6.54px;line-height:8.72px;color:#bdbdbd;transform:scaleX(0.8333);transform-origin:left center;">Поиск (Ctrl+F)</div>
<svg class="s" width="836" height="441" viewBox="0 0 836 441"><path d="M786 168.8l2.4 2.4M788.4 168.8l-2.4 2.4" stroke="#555" stroke-width="0.6"/></svg>
<div style="left:796.3px;top:164.6px;width:25.4px;height:10.6px;background:linear-gradient(#ffffff,#f3f3f3);border:1px solid #cdcdcd;box-sizing:border-box;border-radius:2px;box-shadow:0 0.6px 0.6px rgba(0,0,0,0.18)"></div>
<div class="t" style="left:801.8px;top:166.18px;font-size:7.08px;line-height:9.44px;color:#444;transform:scaleX(0.8333);transform-origin:left center;">Еще</div>
<svg class="s" width="836" height="441" viewBox="0 0 836 441"><path d="M815.1 169.70000000000002h2.6l-1.3 1.4z" fill="#555"/></svg>
<div style="left:454.3px;top:179.2px;width:367.6px;height:207.8px;border:1px solid #d2d2d2;box-sizing:border-box"></div>
<div style="left:455.3px;top:180.2px;width:365.6px;height:13.4px;background:#f0f0f0;border-bottom:1px solid #e6e6e6;box-sizing:border-box"></div>
<div style="left:603.7px;top:180.2px;width:0.8px;height:13.4px;background:#e2e2e2"></div>
<div style="left:666.9px;top:180.2px;width:0.8px;height:13.4px;background:#e2e2e2"></div>
<div style="left:717.4px;top:180.2px;width:0.8px;height:13.4px;background:#e2e2e2"></div>
<div style="left:767.4px;top:180.2px;width:0.8px;height:13.4px;background:#e2e2e2"></div>
<div class="t" style="left:457.8px;top:183.04px;font-size:6.54px;line-height:8.72px;color:#5a5a5a;transform:scaleX(0.8333);transform-origin:left center;">Наименование</div>
<svg class="s" width="836" height="441" viewBox="0 0 836 441"><path d="M596.8 184.2v4.2M595.6 187.2l1.2 1.4l1.2-1.4" stroke="#666" stroke-width="0.55" fill="none"/></svg>
<div class="t" style="left:607.8px;top:183.04px;font-size:6.54px;line-height:8.72px;color:#5a5a5a;transform:scaleX(0.8333);transform-origin:left center;">Индекс</div>
<div class="t" style="left:671.4px;top:183.04px;font-size:6.54px;line-height:8.72px;color:#5a5a5a;transform:scaleX(0.8333);transform-origin:left center;">Начато</div>
<div class="t" style="left:721.7px;top:183.04px;font-size:6.54px;line-height:8.72px;color:#5a5a5a;transform:scaleX(0.8333);transform-origin:left center;">Окончено</div>
<div class="t" style="left:771.7px;top:183.04px;font-size:6.54px;line-height:8.72px;color:#5a5a5a;transform:scaleX(0.8333);transform-origin:left center;">Комментарий</div>
<div style="left:455.3px;top:193.6px;width:365.4px;height:11.7px;background:#fdf0c2"></div>
<div style="left:455.3px;top:204.70000000000002px;width:365.4px;height:0.6px;background:#ebebeb"></div>
<div style="left:455.3px;top:216.8px;width:365.4px;height:0.6px;background:#ebebeb"></div>
<div style="left:455.3px;top:217.4px;width:365.4px;height:12.2px;background:#f6f6f6"></div>
<div style="left:455.3px;top:229.0px;width:365.4px;height:0.6px;background:#ebebeb"></div>
<div style="left:455.3px;top:241.5px;width:365.4px;height:0.6px;background:#ebebeb"></div>
<div style="left:455.3px;top:242.1px;width:365.4px;height:12.6px;background:#f6f6f6"></div>
<div style="left:455.3px;top:254.1px;width:365.4px;height:0.6px;background:#ebebeb"></div>
<div style="left:455.3px;top:266.59999999999997px;width:365.4px;height:0.6px;background:#ebebeb"></div>
<div style="left:455.3px;top:267.2px;width:365.4px;height:12.3px;background:#f6f6f6"></div>
<div style="left:455.3px;top:278.9px;width:365.4px;height:0.6px;background:#ebebeb"></div>
<div style="left:455.3px;top:291.7px;width:365.4px;height:0.6px;background:#ebebeb"></div>
<div style="left:603.7px;top:193.6px;width:0.8px;height:11.7px;background:#f6e6b8"></div>
<div style="left:666.9px;top:193.6px;width:0.8px;height:11.7px;background:#f6e6b8"></div>
<div style="left:717.4px;top:193.6px;width:0.8px;height:11.7px;background:#f6e6b8"></div>
<div style="left:767.4px;top:193.6px;width:0.8px;height:11.7px;background:#f6e6b8"></div>
<svg class="s" width="836" height="441" viewBox="0 0 836 441"><circle cx="461" cy="199.45" r="2.2" fill="#ececec" stroke="#d8d8d8" stroke-width="0.4"/><path d="M459.9 199.45h2.2" stroke="#a0a0a0" stroke-width="0.5"/></svg>
<svg class="s" width="836" height="441" viewBox="0 0 836 441"><path d="M466.4 196.85h2.6l0.8 0.9h3.4v4.3h-6.8z" fill="#e4b54c"/><rect x="467.29999999999995" y="198.35" width="5" height="1.9" fill="#a9b7c6"/><path d="M466.4 200.04999999999998h6.8v2h-6.8z" fill="#deaa3c"/></svg>
<div style="left:475.3px;top:193.9px;width:17.5px;height:11.1px;background:#fbe49c;border:1px solid #f2c94a;box-sizing:border-box"></div>
<div class="t" style="left:477.4px;top:196.67px;font-size:6.72px;line-height:8.96px;color:#404040;transform:scaleX(0.8333);transform-origin:left center;">2 019</div>
<svg class="s" width="836" height="441" viewBox="0 0 836 441"><circle cx="469" cy="211.35000000000002" r="2.2" fill="#ececec" stroke="#d8d8d8" stroke-width="0.4"/><path d="M467.9 211.35000000000002h2.2M469 210.25000000000003v2.2" stroke="#a0a0a0" stroke-width="0.5"/></svg>
<svg class="s" width="836" height="441" viewBox="0 0 836 441"><path d="M474.4 208.75000000000003h2.6l0.8 0.9h3.4v4.3h-6.8z" fill="#e4b54c"/><rect x="475.29999999999995" y="210.25000000000003" width="5" height="1.9" fill="#a9b7c6"/><path d="M474.4 211.95000000000002h6.8v2h-6.8z" fill="#deaa3c"/></svg>
<div class="t" style="left:485.4px;top:208.15px;font-size:6.6px;line-height:8.8px;color:#404040;transform:scaleX(0.8333);transform-origin:left center;">Отдел кадрового администрирования</div>
<svg class="s" width="836" height="441" viewBox="0 0 836 441"><circle cx="469" cy="223.5" r="2.2" fill="#ececec" stroke="#d8d8d8" stroke-width="0.4"/><path d="M467.9 223.5h2.2M469 222.4v2.2" stroke="#a0a0a0" stroke-width="0.5"/></svg>
<svg class="s" width="836" height="441" viewBox="0 0 836 441"><path d="M474.4 220.9h2.6l0.8 0.9h3.4v4.3h-6.8z" fill="#e4b54c"/><rect x="475.29999999999995" y="222.4" width="5" height="1.9" fill="#a9b7c6"/><path d="M474.4 224.1h6.8v2h-6.8z" fill="#deaa3c"/></svg>
<div class="t" style="left:485.4px;top:220.3px;font-size:6.6px;line-height:8.8px;color:#404040;transform:scaleX(0.8333);transform-origin:left center;">Отдел оперативного делопроизводства</div>
<svg class="s" width="836" height="441" viewBox="0 0 836 441"><circle cx="461" cy="235.85" r="2.2" fill="#ececec" stroke="#d8d8d8" stroke-width="0.4"/><path d="M459.9 235.85h2.2" stroke="#a0a0a0" stroke-width="0.5"/></svg>
<svg class="s" width="836" height="441" viewBox="0 0 836 441"><path d="M466.4 233.25h2.6l0.8 0.9h3.4v4.3h-6.8z" fill="#e4b54c"/><rect x="467.29999999999995" y="234.75" width="5" height="1.9" fill="#a9b7c6"/><path d="M466.4 236.45h6.8v2h-6.8z" fill="#deaa3c"/></svg>
<div class="t" style="left:477.4px;top:233.07px;font-size:6.72px;line-height:8.96px;color:#404040;transform:scaleX(0.8333);transform-origin:left center;">2 021</div>
<svg class="s" width="836" height="441" viewBox="0 0 836 441"><circle cx="469" cy="248.39999999999998" r="2.2" fill="#ececec" stroke="#d8d8d8" stroke-width="0.4"/><path d="M467.9 248.39999999999998h2.2M469 247.29999999999998v2.2" stroke="#a0a0a0" stroke-width="0.5"/></svg>
<svg class="s" width="836" height="441" viewBox="0 0 836 441"><path d="M474.4 245.79999999999998h2.6l0.8 0.9h3.4v4.3h-6.8z" fill="#e4b54c"/><rect x="475.29999999999995" y="247.29999999999998" width="5" height="1.9" fill="#a9b7c6"/><path d="M474.4 248.99999999999997h6.8v2h-6.8z" fill="#deaa3c"/></svg>
<div class="t" style="left:485.4px;top:245.2px;font-size:6.6px;line-height:8.8px;color:#404040;transform:scaleX(0.8333);transform-origin:left center;">Отдел кадрового администрирования</div>
<svg class="s" width="836" height="441" viewBox="0 0 836 441"><circle cx="461" cy="260.95" r="2.2" fill="#ececec" stroke="#d8d8d8" stroke-width="0.4"/><path d="M459.9 260.95h2.2" stroke="#a0a0a0" stroke-width="0.5"/></svg>
<svg class="s" width="836" height="441" viewBox="0 0 836 441"><path d="M466.4 258.34999999999997h2.6l0.8 0.9h3.4v4.3h-6.8z" fill="#e4b54c"/><rect x="467.29999999999995" y="259.84999999999997" width="5" height="1.9" fill="#a9b7c6"/><path d="M466.4 261.55h6.8v2h-6.8z" fill="#deaa3c"/></svg>
<div class="t" style="left:477.4px;top:258.17px;font-size:6.72px;line-height:8.96px;color:#404040;transform:scaleX(0.8333);transform-origin:left center;">2 024</div>
<svg class="s" width="836" height="441" viewBox="0 0 836 441"><circle cx="469" cy="273.35" r="2.2" fill="#ececec" stroke="#d8d8d8" stroke-width="0.4"/><path d="M467.9 273.35h2.2" stroke="#a0a0a0" stroke-width="0.5"/></svg>
<svg class="s" width="836" height="441" viewBox="0 0 836 441"><path d="M474.4 270.75h2.6l0.8 0.9h3.4v4.3h-6.8z" fill="#e4b54c"/><rect x="475.29999999999995" y="272.25" width="5" height="1.9" fill="#a9b7c6"/><path d="M474.4 273.95000000000005h6.8v2h-6.8z" fill="#deaa3c"/></svg>
<div class="t" style="left:485.4px;top:270.15px;font-size:6.6px;line-height:8.8px;color:#404040;transform:scaleX(0.8333);transform-origin:left center;">Отдел кадрового администрирования</div>
<div style="left:483.6px;top:284.9px;width:4.5px;height:2.0px;background:#4f7fb5;border-radius:0.8px"></div>
<div class="t" style="left:493.3px;top:282.7px;font-size:6.6px;line-height:8.8px;color:#404040;transform:scaleX(0.8333);transform-origin:left center;">Должностные инструкции (том №1)</div>
<div class="t" style="left:607.8px;top:282.9px;font-size:6.6px;line-height:8.8px;color:#404040;transform:scaleX(0.8333);transform-origin:left center;">01.2.1-03</div>
<div class="t" style="left:671.4px;top:282.9px;font-size:6.6px;line-height:8.8px;color:#404040;transform:scaleX(0.8333);transform-origin:left center;">01.01.2024</div>
<div class="t" style="left:721.7px;top:282.9px;font-size:6.6px;line-height:8.8px;color:#404040;transform:scaleX(0.8333);transform-origin:left center;">05.05.2025</div>
<div style="left:467.2px;top:277.7px;width:304.5px;height:27.6px;border:1px solid #f39570;box-sizing:border-box"></div>
<div style="left:780.5px;top:387px;width:41.4px;height:8.4px;border:1px solid #d0d0d0;border-top:none;box-sizing:border-box;background:#fff;border-radius:0 0 1px 1px"></div>
<div style="left:791.3px;top:387px;width:0.9px;height:8.2px;background:#d6d6d6"></div>
<div style="left:801.4px;top:387px;width:0.9px;height:8.2px;background:#d6d6d6"></div>
<div style="left:811.6px;top:387px;width:0.9px;height:8.2px;background:#d6d6d6"></div>
<svg class="s" width="836" height="441" viewBox="0 0 836 441"><path d="M784.1 392.4h3.6l-1.8 -2.0z" fill="#8a8a8a"/><rect x="784.1" y="388.7" width="3.6" height="0.7" fill="#8a8a8a"/><path d="M794.5 392.1h3.6l-1.8 -2.0z" fill="#8a8a8a"/><path d="M804.7 390.0h3.6l-1.8 2.0z" fill="#8a8a8a"/><path d="M814.9000000000001 389.8h3.6l-1.8 2.0z" fill="#8a8a8a"/><rect x="814.9" y="392.6" width="3.6" height="0.7" fill="#8a8a8a"/></svg>
<svg class="s" width="836" height="441" viewBox="0 0 836 441"><path d="M649 404.5v7.4l1.8-1.6l1.3 2.8l1.1-0.5l-1.3-2.7h2.5z" fill="#fff" stroke="#555" stroke-width="0.55"/></svg>
<svg class="s" width="836" height="441" viewBox="0 0 836 441"><path d="M139 266.6L458 281.8" stroke="#ec0a0a" stroke-width="1.35"/><path d="M457.2 277.6L465.6 282.2L457.2 286z" fill="#ec0a0a"/></svg>
</body></html>
